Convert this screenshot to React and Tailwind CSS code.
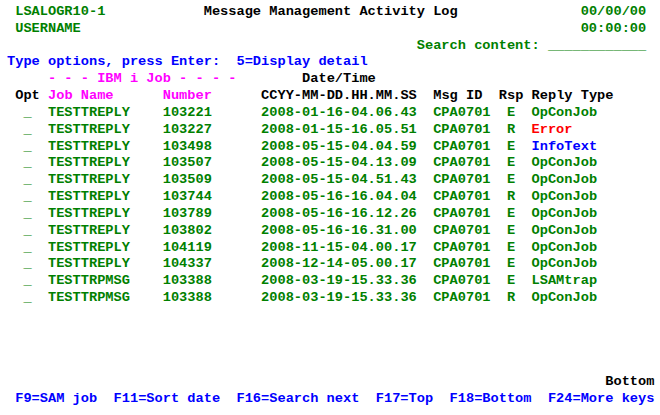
const G = "text-[#008000]";
const K = "text-black";
const B = "text-[#0000ff]";
const M = "text-[#ff00ff]";
const R = "text-[#ff0000]";

const rows = [
  ["TESTTREPLY", "103221", "2008-01-16-04.06.43", "E", "OpConJob", G],
  ["TESTTREPLY", "103227", "2008-01-15-16.05.51", "R", "Error", R],
  ["TESTTREPLY", "103498", "2008-05-15-04.04.59", "E", "InfoText", B],
  ["TESTTREPLY", "103507", "2008-05-15-04.13.09", "E", "OpConJob", G],
  ["TESTTREPLY", "103509", "2008-05-15-04.51.43", "E", "OpConJob", G],
  ["TESTTREPLY", "103744", "2008-05-16-16.04.04", "R", "OpConJob", G],
  ["TESTTREPLY", "103789", "2008-05-16-16.12.26", "E", "OpConJob", G],
  ["TESTTREPLY", "103802", "2008-05-16-16.31.00", "E", "OpConJob", G],
  ["TESTTREPLY", "104119", "2008-11-15-04.00.17", "E", "OpConJob", G],
  ["TESTTREPLY", "104337", "2008-12-14-05.00.17", "E", "OpConJob", G],
  ["TESTTRPMSG", "103388", "2008-03-19-15.33.36", "E", "LSAMtrap", G],
  ["TESTTRPMSG", "103388", "2008-03-19-15.33.36", "R", "OpConJob", G],
];

// each line: list of [column, text, colour]
const screen = [
  [[1, "LSALOGR10-1", G], [24, "Message Management Activity Log", K], [70, "00/00/00", G]],
  [[1, "USERNAME", G], [70, "00:00:00", G]],
  [[50, "Search content:", G], [66, "____________", G]],
  [[0, "Type options, press Enter:  5=Display detail", B]],
  [[5, "- - - IBM i Job - - - -", M], [36, "Date/Time", K]],
  [
    [1, "Opt", K],
    [5, "Job Name", M],
    [19, "Number", M],
    [31, "CCYY-MM-DD.HH.MM.SS", K],
    [52, "Msg ID", K],
    [60, "Rsp", K],
    [64, "Reply Type", K],
  ],
  ...rows.map(([name, num, date, rsp, type, tc]) => [
    [2, "_", G],
    [5, name, G],
    [19, num, G],
    [31, date, G],
    [52, "CPA0701", G],
    [61, rsp, G],
    [64, type, tc],
  ]),
  [], [], [], [],
  [[73, "Bottom", K]],
  [[1, "F9=SAM job  F11=Sort date  F16=Search next  F17=Top  F18=Bottom  F24=More keys", B]],
];

function Line({ fields }) {
  let pos = 0;
  return (
    <div className="h-[16.83px] leading-[16.83px] whitespace-pre">
      {fields.map(([col, text, color], i) => {
        const pad = " ".repeat(Math.max(0, col - pos));
        pos = col + text.length;
        return (
          <span key={i}>
            {pad}
            <span className={color}>{text}</span>
          </span>
        );
      })}
      {fields.length === 0 ? " " : null}
    </div>
  );
}

export default function App() {
  return (
    <div className="w-[660px] h-[415px] bg-white overflow-hidden pl-[7px] pt-[4px] font-['Liberation_Mono','Courier_New',monospace] font-bold text-[13.67px]">
      {screen.map((fields, i) => (
        <Line key={i} fields={fields} />
      ))}
    </div>
  );
}
